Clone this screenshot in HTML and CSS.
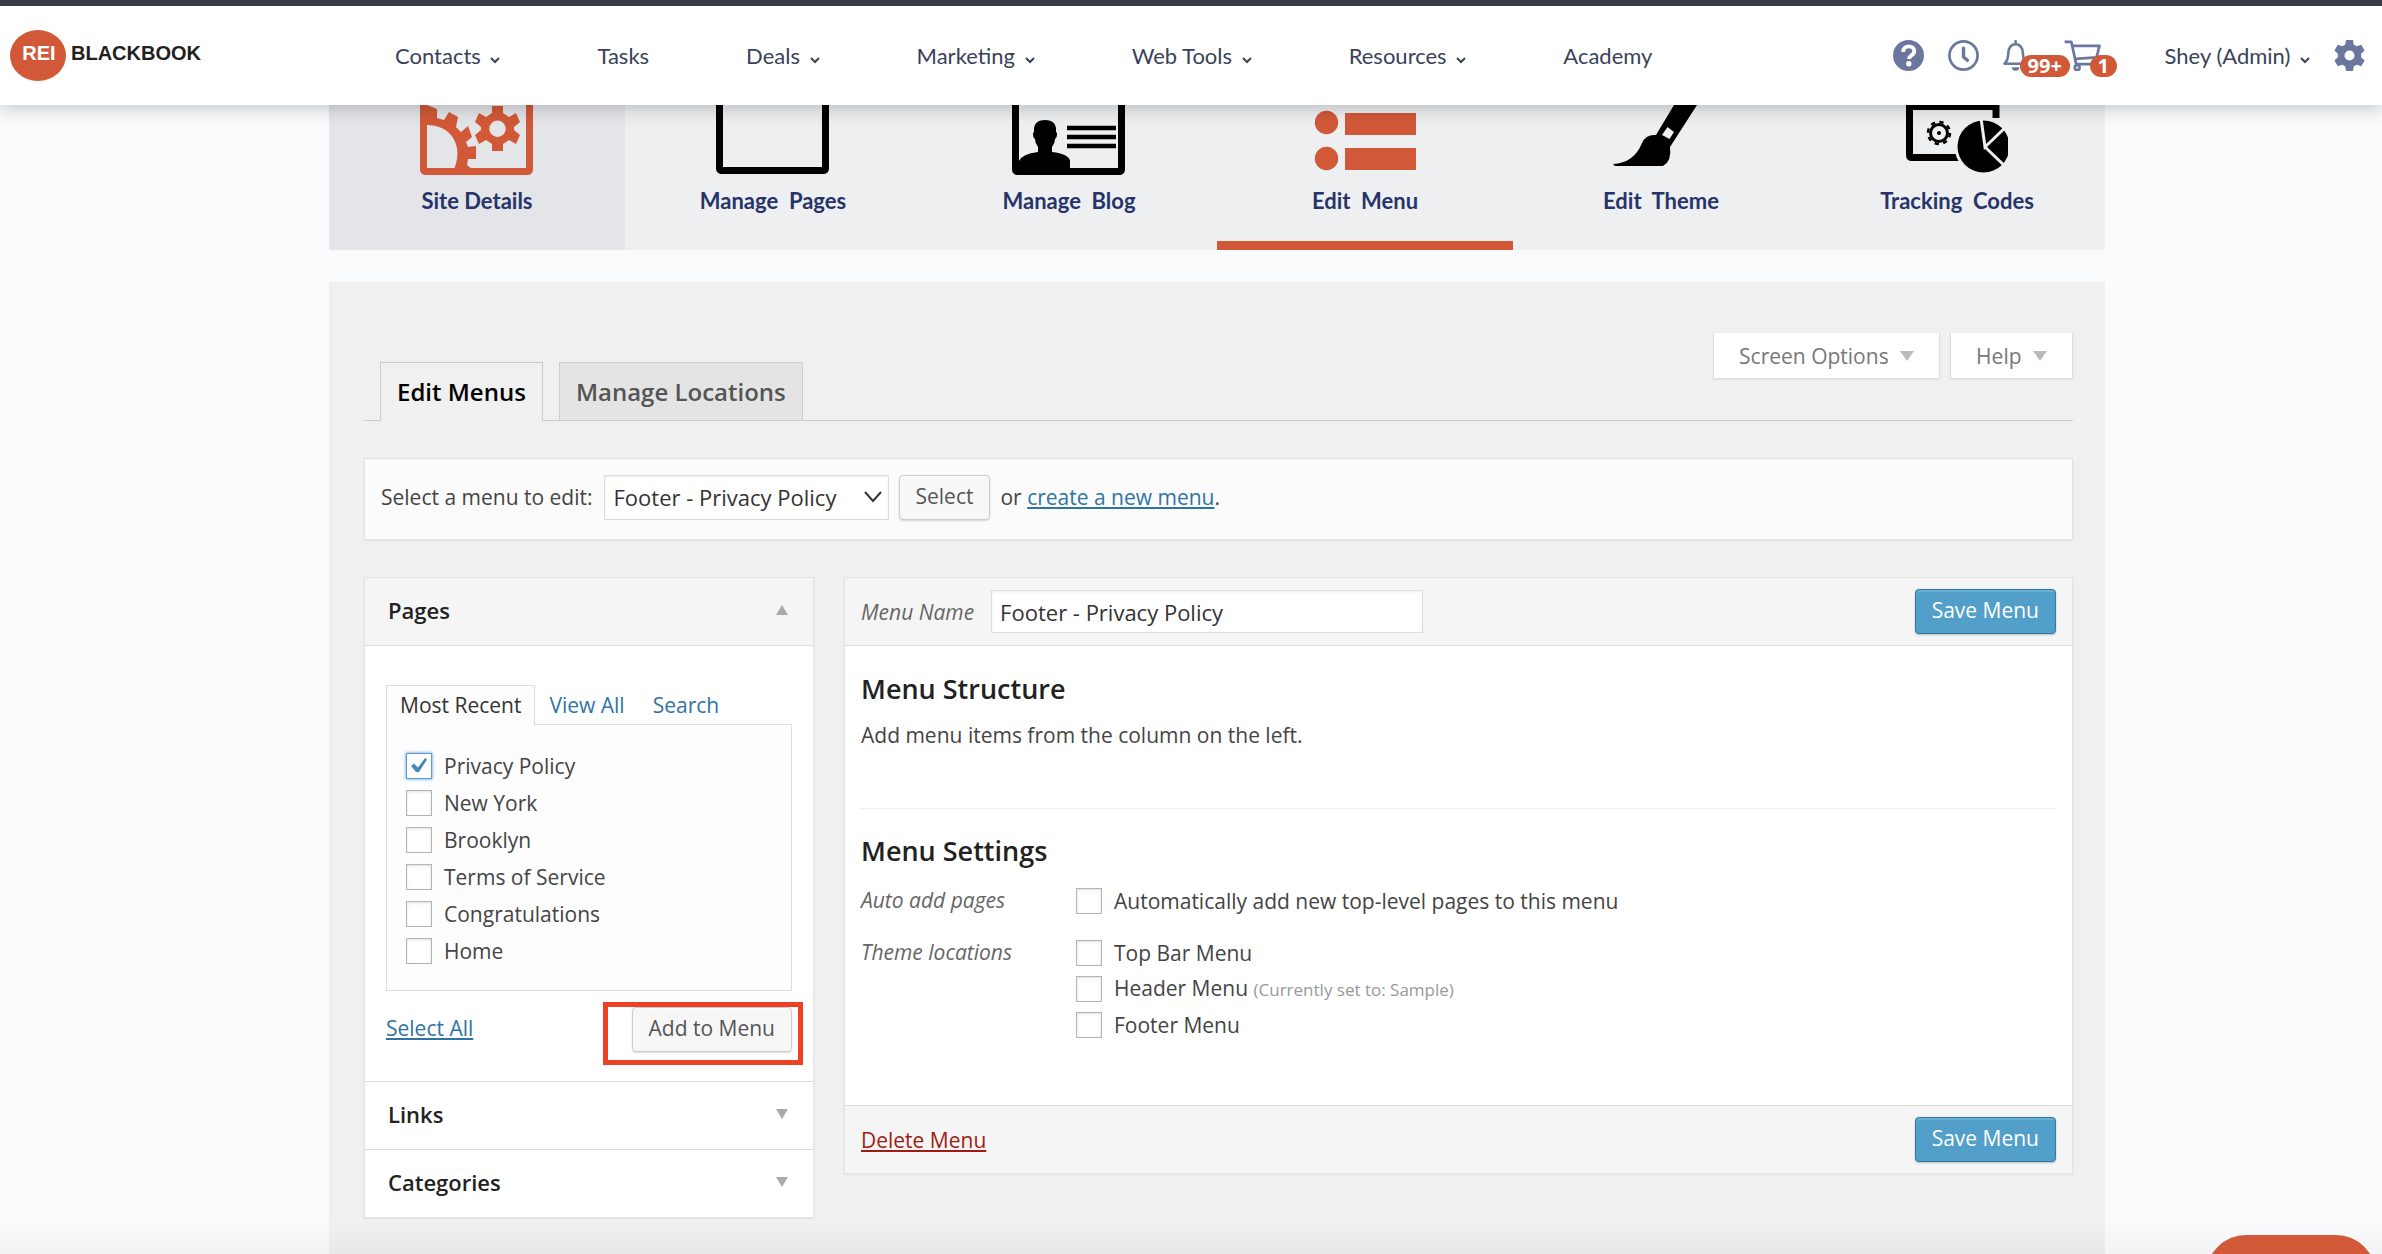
FILE: index.html
```html
<!DOCTYPE html>
<html lang="en">

<head>
  <meta charset="UTF-8" />
  <title>Edit Menus</title>
  <meta name="viewport" content="width=device-width, initial-scale=1.0" />
  <link rel="stylesheet" href="styles.css">
</head>

<body>

  <header class="topbar">
    <a href="#" class="logo"><span class="logo-mark">REI</span><span class="logo-text">BLACKBOOK</span></a>

    <nav class="main-nav">
      <a href="#">Contacts <svg class="caret" viewBox="0 0 10 8"><path d="M1 2l4 4 4-4" /></svg></a>
      <a href="#">Tasks</a>
      <a href="#">Deals <svg class="caret" viewBox="0 0 10 8"><path d="M1 2l4 4 4-4" /></svg></a>
      <a href="#">Marketing <svg class="caret" viewBox="0 0 10 8"><path d="M1 2l4 4 4-4" /></svg></a>
      <a href="#">Web Tools <svg class="caret" viewBox="0 0 10 8"><path d="M1 2l4 4 4-4" /></svg></a>
      <a href="#">Resources <svg class="caret" viewBox="0 0 10 8"><path d="M1 2l4 4 4-4" /></svg></a>
      <a href="#">Academy</a>
    </nav>

    <div class="tools">
      <a href="#" class="tool" aria-label="Help">
        <svg viewBox="0 0 32 32"><circle cx="16" cy="16" r="16" fill="#6b779f" /><path d="M10.500 12.500c0-8 11.500-7.500 11.500-1 0 4.500-5.500 4.200-5.500 8" fill="none" stroke="#fff" stroke-width="4" /><circle cx="16.300" cy="24.500" r="2.800" fill="#fff" /></svg>
      </a>
      <a href="#" class="tool" aria-label="History">
        <svg viewBox="0 0 32 32" fill="none" stroke="#6b779f"><circle cx="16" cy="16" r="14.500" stroke-width="2.800" /><path d="M16 8.500v9l4 3.500" stroke-width="3.500" stroke-linecap="round" stroke-linejoin="round" /></svg>
      </a>
      <a href="#" class="tool bell" aria-label="Notifications">
        <svg viewBox="3 0 32 32"><path d="M16 1v3M4.500 24.500h23c-3-3-3.500-5-4-11C23 7 20 4.500 16 4.500S9 7 8.500 13.500c-.5 6-1 8-4 11z" fill="none" stroke="#6b779f" stroke-width="2.600" stroke-linejoin="round" stroke-linecap="round" /><path d="M12 28h8c0 5-8 5-8 0z" fill="#6b779f" /></svg>
        <span class="badge">99+</span>
      </a>
      <a href="#" class="tool cart" aria-label="Cart">
        <svg viewBox="0 0 38 32" fill="none" stroke="#6b779f" stroke-width="2.800"><path d="M0 2h7l5 23h20M8 6h28l-3 12-22 1.500" stroke-linejoin="round" /><circle cx="13" cy="28.500" r="2.500" /><circle cx="31" cy="28.500" r="2.500" /></svg>
        <span class="badge">1</span>
      </a>
      <a href="#" class="user">Shey (Admin) <svg class="caret" viewBox="0 0 10 8"><path d="M1 2l4 4 4-4" /></svg></a>
      <a href="#" class="tool" aria-label="Settings">
        <svg viewBox="0 0 32 32"><path fill="#6b779f" fill-rule="evenodd" d="M12.500 0h7l1 4.800 3 1.700 4.600-1.600 3.500 6-3.600 3.200v3.800l3.600 3.200-3.500 6-4.600-1.600-3 1.700-1 4.800h-7l-1-4.800-3-1.700-4.600 1.600-3.500-6L4 17.900v-3.800L.4 10.900l3.500-6 4.600 1.600 3-1.700zM16 10.800a5.200 5.200 0 1 0 0 10.400 5.200 5.200 0 0 0 0-10.400z" /></svg>
      </a>
    </div>
  </header>

  <main class="page">
    <nav class="site-tabs">
      <a href="#" class="site-tab hovered">
        <svg viewBox="0 0 114 72">
          <rect x="3.500" y="-30" width="106" height="96.500" rx="2" fill="none" stroke="#d15937" stroke-width="7" />
          <path fill="#d15937" d="M7 0L17 4V13L24 15 29 7 38 12 36 22 41 27 48 21 52 32 46 37 48 42 56 41V54H48L47 60 52 64V67H33C45 42 32 20 7 20z" />
          <path fill="#d15937" fill-rule="evenodd" d="M72 1h11v7l6 4 7-4 4 9-6 5v3l6 5-4 9-7-4-6 4v7H72v-7l-6-4-7 4-4-9 6-5v-3l-6-5 4-9 7 4 6-4zM77.500 15.500a8.200 8.200 0 1 0 0 16.400 8.200 8.200 0 0 0 0-16.400z" />
        </svg>
        Site Details
      </a>
      <a href="#" class="site-tab">
        <svg viewBox="0 0 114 72"><rect x="3.500" y="-30" width="106" height="95.500" rx="2" fill="none" stroke="#000" stroke-width="7" /></svg>
        Manage&nbsp; Pages
      </a>
      <a href="#" class="site-tab">
        <svg viewBox="0 0 114 72">
          <rect x="3.500" y="-30" width="106" height="96.500" rx="2" fill="none" stroke="#000" stroke-width="7" />
          <path d="M7 64V56q3-7 19-9v-5q-3-4-3-8-2-1-2-5 0-2 1-2-1-12 11-12t11 12q1 0 1 2 0 4-2 5 0 4-3 8v5q17 2 18 9v8z" />
          <path d="M55 23h49M55 32h49M55 41h49" stroke="#000" stroke-width="4.500" />
        </svg>
        Manage&nbsp; Blog
      </a>
      <a href="#" class="site-tab current">
        <svg viewBox="0 0 114 72" fill="#d15937"><circle cx="18.500" cy="17.500" r="11.700" /><circle cx="18.500" cy="53.500" r="11.700" /><path d="M37 8h71v22H37zM37 43h71v22H37z" /></svg>
        Edit&nbsp; Menu
      </a>
      <a href="#" class="site-tab">
        <svg viewBox="0 0 114 72"><path d="M70 0H93L66 42Q68 56 59 61H11L9 59Q30 58 38 38 42 29 52 30z" /><path d="M63.500 22l6.500 5-4.500 7-7.500-4z" fill="#eeeff1" /></svg>
        Edit&nbsp; Theme
      </a>
      <a href="#" class="site-tab">
        <svg viewBox="0 0 114 72">
          <path d="M96 13V1.500H9.500V50q0 2.500 2.500 2.500h50" fill="none" stroke="#000" stroke-width="7" />
          <circle cx="39" cy="28" r="8.500" fill="none" stroke="#000" stroke-width="3" /><circle cx="39" cy="28" r="11" fill="none" stroke="#000" stroke-width="2.500" stroke-dasharray="4.300 4.340" /><circle cx="39" cy="28" r="2" />
          <circle cx="83.500" cy="41.500" r="29" fill="#eeeff1" /><circle cx="83.500" cy="41.500" r="26" />
          <path d="M81 13l4 29 25-24M85 42l25 24" fill="none" stroke="#eeeff1" stroke-width="3" /><path d="M108 10h6v60h-6z" fill="#eeeff1" />
        </svg>
        Tracking&nbsp; Codes
      </a>
    </nav>

    <section class="admin">
      <div class="screen-meta">
        <button type="button">Screen Options <span class="arrow down"></span></button>
        <button type="button">Help <span class="arrow down"></span></button>
      </div>

      <div class="nav-tabs">
        <a href="#" class="nav-tab active">Edit Menus</a>
        <a href="#" class="nav-tab">Manage Locations</a>
      </div>

      <form class="manage-menus">
        <label for="menuSelect">Select a menu to edit:</label>
        <select id="menuSelect">
          <option>Footer - Privacy Policy</option>
        </select>
        <button type="button" class="button">Select</button>
        <span>or <a href="#">create a new menu</a>.</span>
      </form>

      <div class="columns">
        <aside class="accordion">
          <h3 class="acc-title open">Pages <span class="arrow up"></span></h3>
          <div class="acc-body">
            <div class="page-tabs">
              <a href="#" class="active">Most Recent</a>
              <a href="#">View All</a>
              <a href="#">Search</a>
            </div>
            <div class="page-list">
              <label><input type="checkbox" class="focused" checked /> Privacy Policy</label>
              <label><input type="checkbox" /> New York</label>
              <label><input type="checkbox" /> Brooklyn</label>
              <label><input type="checkbox" /> Terms of Service</label>
              <label><input type="checkbox" /> Congratulations</label>
              <label><input type="checkbox" /> Home</label>
            </div>
            <div class="list-controls">
              <a href="#">Select All</a>
              <div class="highlight"><button type="button" class="button">Add to Menu</button></div>
            </div>
          </div>
          <h3 class="acc-title">Links <span class="arrow down"></span></h3>
          <h3 class="acc-title">Categories <span class="arrow down"></span></h3>
        </aside>

        <form class="menu-edit">
          <div class="menu-head">
            <label for="menuName">Menu Name</label>
            <input type="text" id="menuName" value="Footer - Privacy Policy" />
            <button type="button" class="button primary">Save Menu</button>
          </div>
          <div class="menu-body">
            <h2>Menu Structure</h2>
            <p>Add menu items from the column on the left.</p>
            <div class="settings">
              <h2>Menu Settings</h2>
              <div class="setting">
                <span class="setting-name">Auto add pages</span>
                <div class="options">
                  <label><input type="checkbox" /> Automatically add new top-level pages to this menu</label>
                </div>
              </div>
              <div class="setting">
                <span class="setting-name">Theme locations</span>
                <div class="options">
                  <label><input type="checkbox" /> Top Bar Menu</label>
                  <label><input type="checkbox" /> <span>Header Menu <small>(Currently set to: Sample)</small></span></label>
                  <label><input type="checkbox" /> Footer Menu</label>
                </div>
              </div>
            </div>
          </div>
          <div class="menu-foot">
            <a href="#" class="delete">Delete Menu</a>
            <button type="button" class="button primary">Save Menu</button>
          </div>
        </form>
      </div>
    </section>
  </main>

  <div class="bottom-shade"></div>
  <button type="button" class="chat" aria-label="Chat"></button>

</body>

</html>
```
FILE: styles.css
```css
* {
  box-sizing: border-box;
}

body {
  margin: 0;
  height: 100vh;
  overflow: hidden;
  display: flex;
  flex-direction: column;
  background-color: #fafbfd;
  color: #444;
  font-family: "Open Sans", sans-serif;
  font-size: 21px;
  line-height: 28px;
}

button,
input,
select {
  font-family: inherit;
  font-size: inherit;
}

a {
  color: #2e74a3;
}

/* top bar */
.topbar {
  position: relative;
  z-index: 2;
  flex: none;
  display: flex;
  align-items: center;
  height: 105px;
  padding: 0 17px 0 10px;
  border-top: 6px solid #393a44;
  background-color: #fff;
  box-shadow: 0 2px 18px rgba(0, 0, 0, 0.25);
  font-family: Lato, sans-serif;
  font-size: 22px;
}

.topbar a {
  color: #3a4257;
  text-decoration: none;
  white-space: nowrap;
}

.logo {
  display: flex;
  align-items: center;
  gap: 5px;
  width: 385px;
  font-family: "Liberation Sans", sans-serif;
  font-size: 20px;
  font-weight: bold;
}

.logo span {
  padding-bottom: 5px;
}

.topbar .logo-mark {
  width: 56px;
  padding-left: 2px;
  border-radius: 50%;
  background-color: #d15937;
  color: #fff;
  text-align: center;
  line-height: 46px;
}

.topbar .logo-text {
  color: #231f20;
}

.main-nav {
  display: flex;
  gap: 97px;
}

.caret {
  width: 10px;
  height: 8px;
  margin-left: 4px;
  fill: none;
  stroke: #3a4257;
  stroke-width: 2;
}

.tools {
  display: flex;
  align-items: center;
  gap: 24px;
  margin-left: auto;
}

.tool {
  position: relative;
  display: block;
}

.tool svg {
  display: block;
  width: 31px;
  height: 31px;
}

.tool.cart {
  margin-left: 6px;
}

.tool.cart svg {
  width: 38px;
}

.badge {
  position: absolute;
  left: 17px;
  top: 15px;
  padding: 0 8px;
  border-radius: 11px;
  background-color: #d15937;
  color: #fff;
  font-family: "Open Sans", sans-serif;
  font-size: 20px;
  font-weight: 700;
  line-height: 22px;
}

.cart .badge {
  left: 26px;
}

.user {
  margin-left: 39px;
}

/* page */
.page {
  flex: 1;
  display: flex;
  flex-direction: column;
  width: 100%;
  max-width: 1828px;
  margin: 0 auto;
  padding-left: 52px;
}

.site-tabs {
  display: flex;
  margin-bottom: 32px;
  background-color: #eeeff1;
}

.site-tab {
  flex: 1;
  display: flex;
  flex-direction: column;
  align-items: center;
  gap: 10px;
  height: 145px;
  border-bottom: 9px solid transparent;
  color: #27346a;
  font-family: Lato, sans-serif;
  font-size: 22px;
  font-weight: bold;
  text-decoration: none;
}

.site-tab svg {
  width: 114px;
  height: 72px;
}

.site-tab.hovered {
  background-color: #e4e5e9;
}

.site-tab.current {
  border-bottom-color: #d15937;
}

.admin {
  flex: 1;
  padding: 51px 32px 0 35px;
  background-color: #f0f0f0;
}

.screen-meta {
  display: flex;
  justify-content: flex-end;
  gap: 10px;
  height: 29px;
}

.screen-meta button {
  height: 46px;
  padding: 0 25px;
  border: 1px solid #ddd;
  border-top: none;
  background-color: #fff;
  box-shadow: 0 1px 2px rgba(0, 0, 0, 0.06);
  color: #777;
}

.arrow {
  display: inline-block;
  border: 0 solid transparent;
  border-width: 0 6px;
}

.arrow.down {
  border-top: 10px solid #aaa;
}

.arrow.up {
  border-bottom: 10px solid #aaa;
}

.screen-meta .arrow {
  margin: 0 0 3px 6px;
  border-left-width: 7px;
  border-right-width: 7px;
  border-top-color: #bbb;
}

.nav-tabs {
  display: flex;
  gap: 16px;
  margin-bottom: 37px;
  padding-left: 16px;
  border-bottom: 1px solid #ccc;
}

.nav-tab {
  margin-bottom: -1px;
  padding: 11px 16px 10px;
  border: 1px solid #ccc;
  background-color: #e4e4e4;
  color: #555;
  font-size: 24px;
  font-weight: 600;
  line-height: 36px;
  text-decoration: none;
}

.nav-tab.active {
  border-bottom-color: #f0f0f0;
  background-color: #f0f0f0;
  color: #000;
}

.manage-menus {
  display: flex;
  align-items: center;
  height: 82px;
  margin-bottom: 37px;
  padding: 0 16px 4px;
  border: 1px solid #e2e2e2;
  background-color: #fbfbfb;
  box-shadow: 0 1px 2px rgba(0, 0, 0, 0.06);
}

.manage-menus select {
  width: 285px;
  height: 45px;
  margin: 0 10px 0 11px;
  padding: 0 9px;
  border: 1px solid #ddd;
  border-radius: 0;
  appearance: none;
  background-color: #fff;
  background-image: url("data:image/svg+xml,%3Csvg xmlns='http://www.w3.org/2000/svg' width='18' height='12'%3E%3Cpath d='M1 1l8 9 8-9' fill='none' stroke='%23333' stroke-width='2'/%3E%3C/svg%3E");
  background-position: right 6px center;
  background-repeat: no-repeat;
  box-shadow: inset 0 1px 3px rgba(0, 0, 0, 0.07);
  color: #333;
  font-size: 22px;
}

.manage-menus .button {
  margin-right: 10px;
}

.button {
  height: 45px;
  padding: 0 16px 3px;
  border: 1px solid #ccc;
  border-radius: 4px;
  background-color: #f7f7f7;
  box-shadow: inset 0 1px 0 #fff, 0 1px 2px rgba(0, 0, 0, 0.15);
  color: #555;
}

.button.primary {
  margin-left: auto;
  border-color: #2e77a6;
  background-color: #529fc9;
  box-shadow: inset 0 2px 0 #68afd3, 0 1px 2px rgba(0, 0, 0, 0.25);
  color: #fff;
}

.columns {
  display: flex;
  align-items: flex-start;
  gap: 30px;
}

/* left column */
.accordion {
  flex: none;
  width: 450px;
  border: 1px solid #e2e2e2;
  background-color: #fff;
  box-shadow: 0 1px 2px rgba(0, 0, 0, 0.06);
}

.acc-title {
  display: flex;
  align-items: center;
  justify-content: space-between;
  height: 68px;
  margin: 0;
  padding: 0 25px 3px 23px;
  border-top: 1px solid #ddd;
  color: #222;
  font-size: 22px;
  font-weight: 600;
}

.acc-title.open {
  border-top: none;
  border-bottom: 1px solid #ddd;
  background-color: #f5f5f5;
}

.acc-body {
  padding: 39px 21px 0;
}

.page-tabs {
  display: flex;
}

.page-tabs a {
  padding: 5px 13px;
  border: 1px solid transparent;
  border-bottom: none;
  text-decoration: none;
}

.page-tabs .active {
  margin-bottom: -1px;
  border-color: #ddd;
  background-color: #fdfdfd;
  color: #333;
}

.page-list {
  padding: 22px 19px 21px;
  border: 1px solid #ddd;
  background-color: #fdfdfd;
}

.page-list label,
.options label {
  display: flex;
  align-items: center;
  gap: 12px;
}

.page-list label {
  height: 37px;
}

input[type="checkbox"] {
  appearance: none;
  flex: none;
  width: 26px;
  height: 26px;
  margin: 0;
  border: 1px solid #b4b4b4;
  background-color: #fff;
  box-shadow: inset 0 1px 3px rgba(0, 0, 0, 0.12);
}

input[type="checkbox"]:checked {
  background-image: url("data:image/svg+xml,%3Csvg xmlns='http://www.w3.org/2000/svg' width='24' height='24'%3E%3Cpath d='M4 12l3-2.500 4 4L18 4l2 1.500L12 18h-3z' fill='%234289ba'/%3E%3C/svg%3E");
}

input[type="checkbox"].focused {
  border-color: #5b9dd9;
  box-shadow: 0 0 3px rgba(30, 115, 190, 0.8);
}

.list-controls {
  display: flex;
  align-items: baseline;
  justify-content: space-between;
  height: 90px;
  padding-top: 11px;
}

.highlight {
  margin-right: -11px;
  padding: 0 6px 8px 24px;
  border: 5px solid #ec4125;
}

.highlight .button {
  display: block;
}

/* right column */
.menu-edit {
  flex: 1;
  border: 1px solid #e2e2e2;
  background-color: #fff;
  box-shadow: 0 1px 2px rgba(0, 0, 0, 0.06);
}

.menu-head,
.menu-foot {
  display: flex;
  align-items: center;
  height: 68px;
  padding: 0 16px;
  background-color: #f5f5f5;
}

.menu-head {
  border-bottom: 1px solid #ddd;
}

.menu-foot {
  border-top: 1px solid #ddd;
}

.menu-head label,
.setting-name {
  color: #666;
  font-style: italic;
}

.menu-head input {
  width: 432px;
  height: 43px;
  margin-left: 17px;
  padding: 0 8px;
  border: 1px solid #ddd;
  background-color: #fff;
  box-shadow: inset 0 1px 3px rgba(0, 0, 0, 0.07);
  color: #333;
  font-size: 22px;
}

.menu-body {
  padding: 23px 16px 46px;
}

h2 {
  margin: 0;
  color: #222;
  font-size: 27px;
  font-weight: 600;
  line-height: 40px;
}

.menu-body p {
  margin: 12px 0 59px;
}

.settings {
  padding-top: 22px;
  border-top: 1px solid #eee;
}

.setting {
  display: flex;
  margin: 12px 0 16px;
}

.setting-name {
  width: 215px;
  padding-top: 3px;
}

.options label {
  height: 36px;
}

.options small {
  color: #999;
  font-size: 17px;
}

.delete {
  color: #a01c12;
}

/* fixed at the bottom of the window */
.bottom-shade {
  position: fixed;
  left: 0;
  right: 0;
  bottom: 0;
  height: 34px;
  background: linear-gradient(rgba(0, 0, 0, 0), rgba(0, 0, 0, 0.03));
}

.chat {
  position: fixed;
  right: 6px;
  bottom: -61px;
  width: 170px;
  height: 80px;
  border: none;
  border-radius: 40px;
  background-color: #d15937;
}
```
